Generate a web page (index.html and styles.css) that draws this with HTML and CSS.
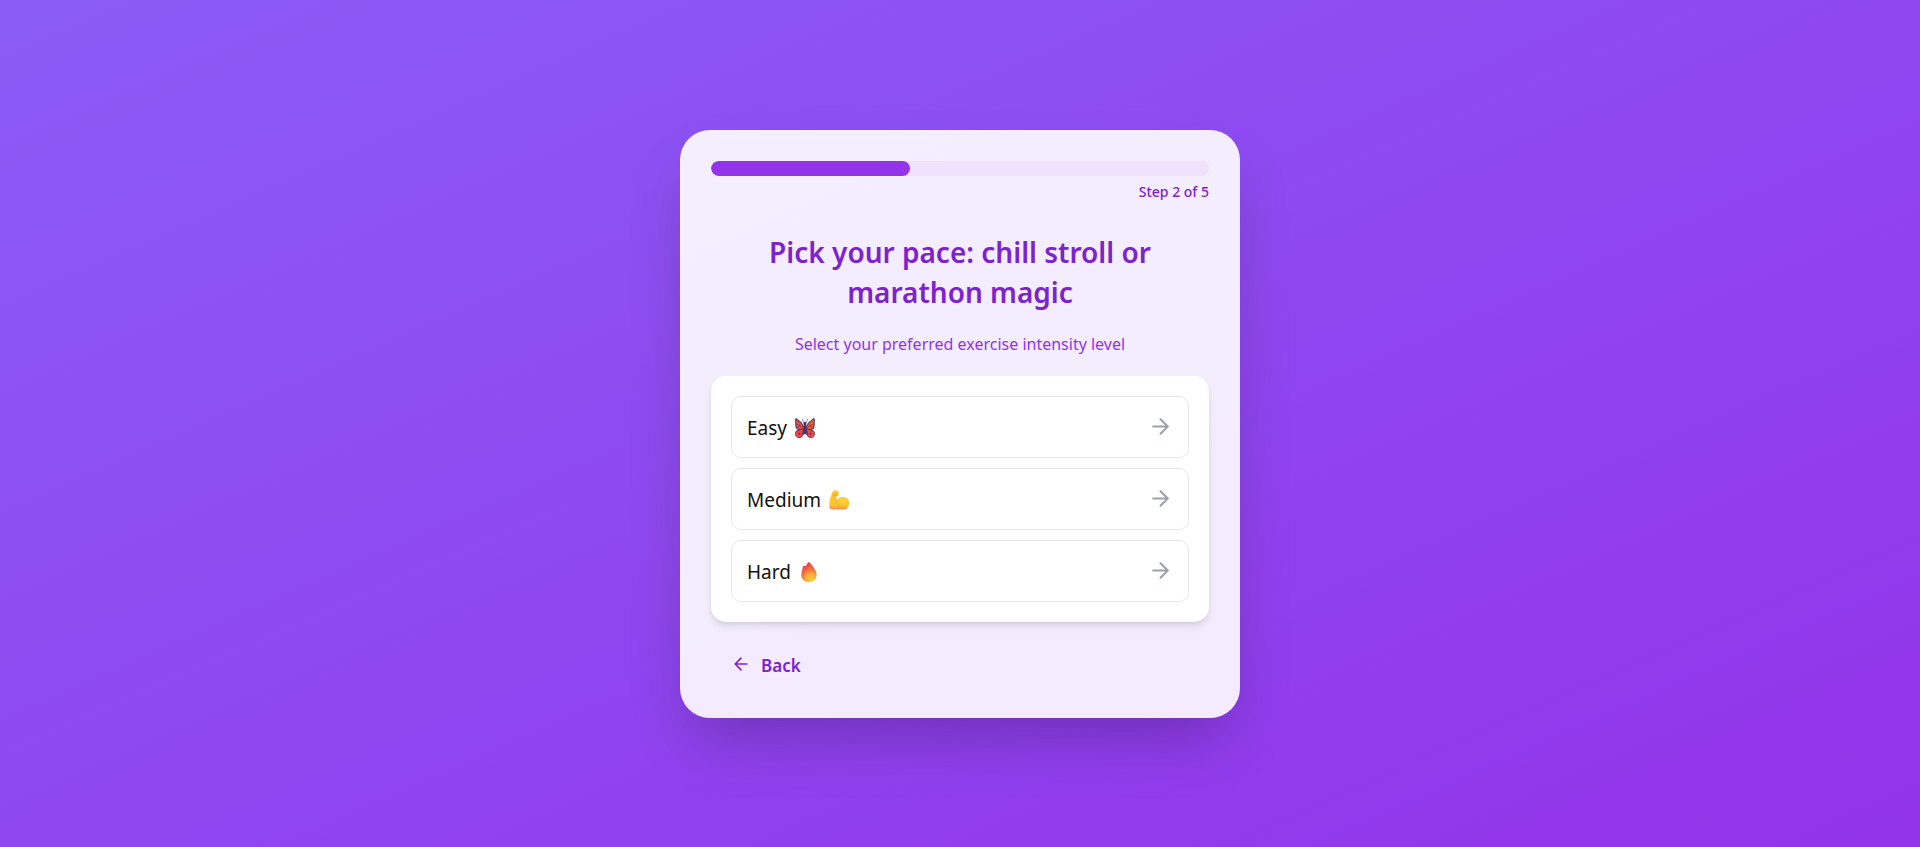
FILE: index.html
```
<!DOCTYPE html>
<html lang="en">
<head>
<meta charset="utf-8">
<meta name="viewport" content="width=device-width, initial-scale=1">
<title>Exercise intensity</title>
<link rel="stylesheet" href="styles.css">
</head>
<body>
<main class="card">
  <div class="progress" role="progressbar" aria-label="Progress" aria-valuemin="0" aria-valuemax="5" aria-valuenow="2">
    <div class="progress-fill" style="width: 40%"></div>
  </div>
  <p class="step">Step 2 of 5</p>
  <h1 class="title">Pick your pace: chill stroll or marathon magic</h1>
  <p class="subtitle">Select your preferred exercise intensity level</p>
  <div class="options">
    <button type="button" class="option">
      <span class="option-label">Easy
        <svg class="emoji" viewBox="0 0 20 20" aria-hidden="true">
          <path d="M9.300 6 7.200.8M10.700 6 12.800.8" fill="none" stroke="#8a7596" stroke-width=".8"/>
          <path d="M9.500 9.500 6.800 4.500 1.600.3Q.1-.1.100 1.500L.3 8Q.5 11.300 4 12l5.500.5zM10.500 9.500 13.200 4.500 18.400.3Q19.900-.1 19.900 1.500L19.700 8Q19.500 11.300 16 12l-5.500.5z" fill="#593c70"/>
          <path d="M1.200 1.600 5.900 5.300l2.800 5.300L4 11Q1.500 10 1.300 7.500z" fill="#e94b43"/>
          <path d="M18.800 1.600 14.100 5.300l-2.800 5.300L16 11q2.500-1 2.700-3.500z" fill="#fb5b13"/>
          <path d="m1.300 6 3.700 1.500 3.500 3M5 7.500l-2.500 2M18.700 6 15 7.500l-3.500 3M15 7.500l2.500 2" fill="none" stroke="#593c70" stroke-width=".7"/>
          <circle cx="4.200" cy="15.800" r="4.200" fill="#593c70"/><circle cx="15.800" cy="15.800" r="4.200" fill="#593c70"/>
          <path d="m2 12 7.500-1v5L7 18zM18 12l-7.500-1v5l2.500 2z" fill="#593c70"/>
          <circle cx="4" cy="16" r="3.300" fill="#f04444"/><circle cx="16" cy="16" r="3.300" fill="#f04444"/>
          <circle cx="4.500" cy="15.800" r="1.100" fill="#593c70"/><circle cx="15.500" cy="15.800" r="1.100" fill="#593c70"/>
          <path d="m4 12.500 4.300-.9-1.300 2.700zM16 12.500l-4.300-.9 1.300 2.700z" fill="#ef503d"/>
          <rect x="8.700" y="3.800" width="2.600" height="12.500" rx="1.300" fill="#4a3264"/>
        </svg>
      </span>
      <svg class="arrow" viewBox="0 0 24 24" aria-hidden="true"><path d="M5 12h14M12 5l7 7-7 7"/></svg>
    </button>
    <button type="button" class="option">
      <span class="option-label">Medium
        <svg class="emoji" viewBox="0 0 20 20" aria-hidden="true">
          <defs>
            <linearGradient id="skin" x1="0" y1="0" x2="0" y2="1"><stop offset="0" stop-color="#ffc526"/><stop offset=".75" stop-color="#ffc630"/><stop offset="1" stop-color="#f08b62"/></linearGradient>
            <radialGradient id="bicep" cx=".6" cy=".3" r=".75"><stop offset="0" stop-color="#ffd83c"/><stop offset=".6" stop-color="#ffc52d"/><stop offset="1" stop-color="#f9a02e"/></radialGradient>
          </defs>
          <path d="M3.500 2Q4.500.5 7 .6q2.600 0 2.900 2.600.1 2.300-1.800 3.200l-1.600.3.700 4.300Q9.500 7 14 7q5.500.4 6 6 .1 6.500-6 6.500H4Q.3 19.500.2 16 .2 9 2.700 4z" fill="url(#skin)"/>
          <path d="M7 12.500Q9.500 7 14 7q5.500.4 6 6-.5 5.300-6 5.300-4.500 0-7-5.800z" fill="url(#bicep)"/>
          <path d="M3.600 4.500q1.800 1.400 3.500.6.700-.4.500-1.500M6.500 6.700l.7 4.300" fill="none" stroke="#ef9627" stroke-width=".8"/>
        </svg>
      </span>
      <svg class="arrow" viewBox="0 0 24 24" aria-hidden="true"><path d="M5 12h14M12 5l7 7-7 7"/></svg>
    </button>
    <button type="button" class="option">
      <span class="option-label">Hard
        <svg class="emoji" viewBox="0 0 20 20" aria-hidden="true">
          <defs>
            <radialGradient id="flame" gradientUnits="userSpaceOnUse" cx="12" cy="17" r="15"><stop offset="0" stop-color="#ffcf31"/><stop offset=".3" stop-color="#fdb034"/><stop offset=".6" stop-color="#f4783f"/><stop offset="1" stop-color="#e9404a"/></radialGradient>
          </defs>
          <path d="M9.500 0q1 0 2.600 2.300 1.400 1.800 2.900 3.600Q17.800 9.500 17.600 13q-.5 6.800-7.600 7-7.200-.1-7.700-6.600-.1-3.500 1-5.900.2-3.400 1.900-3.700.9-.3 1.800.1Q8 1.500 9.500 0z" fill="url(#flame)"/>
          <path d="M9.200 3.500Q9 6.500 6.500 8.500 4.600 10.500 4.500 13M6.400 4.800Q6.500 6.800 4.600 8.700" fill="none" stroke="#df5c4c" stroke-width=".9"/>
        </svg>
      </span>
      <svg class="arrow" viewBox="0 0 24 24" aria-hidden="true"><path d="M5 12h14M12 5l7 7-7 7"/></svg>
    </button>
  </div>
  <button type="button" class="back">
    <svg class="back-arrow" viewBox="0 0 24 24" aria-hidden="true"><path d="M19 12H5M12 19l-7-7 7-7"/></svg>
    <span class="back-label">Back</span>
  </button>
</main>
</body>
</html>
```
FILE: styles.css
```
* {
  box-sizing: border-box;
}

body {
  margin: 0;
  min-height: 100vh;
  display: flex;
  align-items: center;
  justify-content: center;
  background: linear-gradient(to bottom right, #8b5cf6, #9333ea);
  font-family: "Segoe UI", "Noto Sans", "Open Sans", sans-serif;
}

.card {
  width: 100%;
  max-width: 560px;
  padding: 31px;
  border-radius: 30px;
  background: rgba(255, 255, 255, 0.9);
  box-shadow: 0 31px 62px -15px rgba(0, 0, 0, 0.25);
}

.progress {
  height: 15px;
  border-radius: 8px;
  background: #f0e1fd;
  overflow: hidden;
}

.progress-fill {
  height: 100%;
  border-radius: 8px;
  background: #9333ea;
}

.step {
  margin: 5px 0 0;
  font-size: 14px;
  line-height: 22px;
  font-weight: 500;
  text-align: right;
  color: #7e22ce;
}

.title {
  margin: 29px 0 0;
  font-size: 28px;
  line-height: 40px;
  font-weight: 600;
  text-align: center;
  color: #7e22ce;
}

.subtitle {
  margin: 19px 0 0;
  font-size: 16px;
  line-height: 26px;
  font-weight: 400;
  text-align: center;
  color: #9333ea;
}

.options {
  display: flex;
  flex-direction: column;
  gap: 10px;
  margin-top: 19px;
  padding: 20px;
  border-radius: 15px;
  background: #fff;
  box-shadow: 0 5px 8px -1px rgba(0, 0, 0, 0.1), 0 2px 5px -2px rgba(0, 0, 0, 0.1);
}

.option {
  display: flex;
  align-items: center;
  justify-content: space-between;
  height: 62px;
  padding: 0 15px;
  border: 1px solid #e5e7eb;
  border-radius: 10px;
  background: #fff;
  font: inherit;
  font-size: 19px;
  line-height: 28px;
  color: #111;
  cursor: pointer;
}

.option-label {
  display: flex;
  align-items: center;
  gap: 8px;
  padding-top: 2px;
}

.emoji {
  width: 20px;
  height: 20px;
}

.arrow,
.back-arrow {
  fill: none;
  stroke: currentColor;
  stroke-width: 2;
  stroke-linecap: round;
  stroke-linejoin: round;
}

.arrow {
  width: 25px;
  height: 25px;
  color: #9ca3af;
}

.back {
  display: flex;
  align-items: center;
  gap: 10px;
  margin: 20px 0 0;
  padding: 9px 20px;
  border: 0;
  background: none;
  font: inherit;
  font-size: 17px;
  line-height: 25px;
  font-weight: 600;
  color: #7e22ce;
  cursor: pointer;
}

.back-label {
  padding-top: 2px;
}

.back-arrow {
  width: 20px;
  height: 20px;
}
```
